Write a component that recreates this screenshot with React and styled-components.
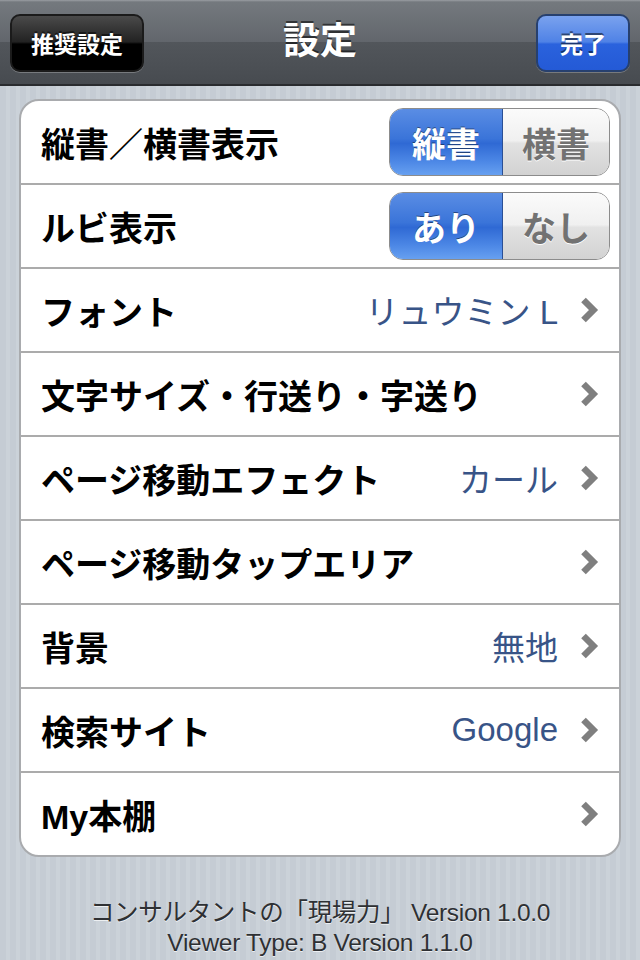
import React from "react";
import styled, { createGlobalStyle } from "styled-components";

const GlobalStyle = createGlobalStyle`
    html, body {
        margin: 0;
        padding: 0;
    }
    body {
        width: 640px;
        height: 960px;
        overflow: hidden;
        font-family: "Liberation Sans", "Noto Sans CJK JP", sans-serif;
        background: repeating-linear-gradient(
            90deg,
            #c5ccd4 0px,
            #c5ccd4 6px,
            #cbd2d9 6px,
            #cbd2d9 10px
        );
    }
`;

const Page = styled.div`
    width: 640px;
    height: 960px;
    display: flex;
    flex-direction: column;
`;

// top navigation bar
const NavBar = styled.div`
    height: 86px;
    box-sizing: border-box;
    padding: 14px 10px 0;
    display: grid;
    grid-template-columns: 1fr auto 1fr;
    align-items: start;
    background: linear-gradient(
        #9a9ea3 0px,
        #74797e 2px,
        #62666c 50%,
        #52565b 50%,
        #474b50 100%
    );
    border-bottom: 2px solid #2a2c2f;
`;

const NavButton = styled.div`
    justify-self: ${(p) => (p.$right ? "end" : "start")};
    height: 58px;
    box-sizing: border-box;
    padding: 0 ${(p) => (p.$right ? "22px" : "19px")};
    display: flex;
    align-items: center;
    justify-content: center;
    border-radius: 10px;
    border: 2px solid ${(p) => (p.$blue ? "#27406e" : "#1b1b1b")};
    background: ${(p) =>
        p.$blue
            ? "linear-gradient(#7aa2ee 0%, #4f82e6 48%, #2a62dd 52%, #245ad6 100%)"
            : "linear-gradient(#4a4a4a 0%, #222 48%, #000 52%, #000 100%)"};
    box-shadow: 0 1px 0 rgba(255, 255, 255, 0.25);
    color: #fff;
    font-size: 23px;
    font-weight: bold;
    text-shadow: 0 -2px 0 rgba(0, 0, 0, 0.5);
`;

const Title = styled.div`
    margin-top: 6px;
    color: #fff;
    font-size: 37px;
    font-weight: bold;
    line-height: 44px;
    text-shadow: 0 -2px 0 rgba(0, 0, 0, 0.55);
`;

// grouped table
const Card = styled.div`
    margin: 13px 19px 0 19px;
    background: #fff;
    border: 2px solid #a9abae;
    border-radius: 20px;
    overflow: hidden;
`;

const Row = styled.div`
    height: 82px;
    display: flex;
    align-items: center;
    padding: 0 20px 0 20px;
    border-bottom: ${(p) => (p.$last ? "none" : "2px solid #ababab")};
`;

const Label = styled.div`
    flex: 1;
    font-size: 34px;
    font-weight: bold;
    color: #000;
    white-space: nowrap;
`;

const Value = styled.div`
    font-size: 33px;
    color: #385487;
    margin-right: 21px;
    white-space: nowrap;
`;

const ChevronSvg = styled.svg`
    flex-shrink: 0;
    width: 20px;
    height: 28px;
    margin-right: 0px;
`;

const Chevron = () => (
    <ChevronSvg viewBox="0 0 20 28">
        <polyline
            points="4.5,4 14.5,14 4.5,24"
            fill="none"
            stroke="#7f7f7f"
            strokeWidth="6.5"
            strokeLinecap="butt"
            strokeLinejoin="miter"
        />
    </ChevronSvg>
);

// segmented control
const Segmented = styled.div`
    display: flex;
    height: 68px;
    margin-right: -11px;
    border-radius: 14px;
    overflow: hidden;
    border: 1px solid #8c8c8c;
    box-sizing: border-box;
`;

const Segment = styled.div`
    width: ${(p) => (p.$on ? "112px" : "106px")};
    display: flex;
    align-items: center;
    justify-content: center;
    font-size: 34px;
    font-weight: bold;
    color: ${(p) => (p.$on ? "#fff" : "#727272")};
    text-shadow: ${(p) =>
        p.$on ? "0 -1px 0 rgba(0,0,0,0.45)" : "0 1px 0 #fff"};
    background: ${(p) =>
        p.$on
            ? "linear-gradient(#5a8de4 0%, #3a74d9 45%, #2f69d4 52%, #4d88e6 80%, #67a0f0 100%)"
            : "linear-gradient(#fbfbfb 0%, #f0f0f0 48%, #e2e2e2 52%, #d2d2d2 100%)"};
    border-left: ${(p) => (p.$on ? "none" : "1px solid #2a4f95")};
`;

const Footer = styled.div`
    margin-top: 41px;
    text-align: center;
    font-size: 24.5px;
    line-height: 30px;
    color: #2e3033;
    text-shadow: 0 1px 0 rgba(255, 255, 255, 0.7);
    letter-spacing: -0.3px;
`;

const rows = [
    { label: "縦書／横書表示", seg: ["縦書", "横書"] },
    { label: "ルビ表示", seg: ["あり", "なし"] },
    { label: "フォント", value: "リュウミン L" },
    { label: "文字サイズ・行送り・字送り" },
    { label: "ページ移動エフェクト", value: "カール" },
    { label: "ページ移動タップエリア" },
    { label: "背景", value: "無地" },
    { label: "検索サイト", value: "Google" },
    { label: "My本棚" },
];

const App = () => {
    return (
        <Page>
            <GlobalStyle />
            {/* header */}
            <NavBar>
                <NavButton>推奨設定</NavButton>
                <Title>設定</Title>
                <NavButton $right $blue>
                    完了
                </NavButton>
            </NavBar>
            {/* settings list */}
            <Card>
                {rows.map((r, i) => (
                    <Row key={r.label} $last={i === rows.length - 1}>
                        <Label>{r.label}</Label>
                        {r.seg ? (
                            <Segmented>
                                <Segment $on>{r.seg[0]}</Segment>
                                <Segment>{r.seg[1]}</Segment>
                            </Segmented>
                        ) : (
                            <>
                                {r.value && <Value>{r.value}</Value>}
                                <Chevron />
                            </>
                        )}
                    </Row>
                ))}
            </Card>
            <Footer>
                コンサルタントの「現場力」 Version 1.0.0
                <br />
                Viewer Type: B Version 1.1.0
            </Footer>
        </Page>
    );
};

export default App;
